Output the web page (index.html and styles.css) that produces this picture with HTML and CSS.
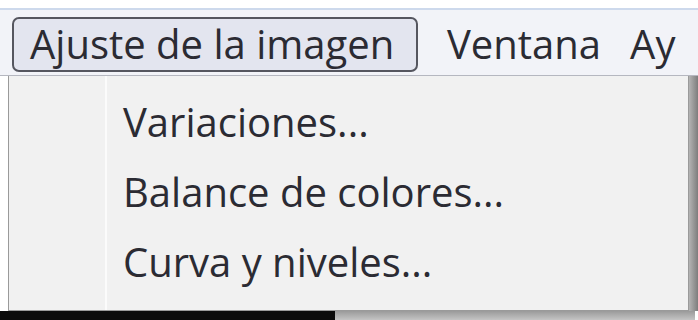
FILE: index.html
```html
<!DOCTYPE html>
<html lang="es">
<head>
    <meta charset="UTF-8">
    <title>Ajuste de la imagen</title>
    <link rel="stylesheet" href="styles.css">
</head>
<body>
    <div class="screen">
        <nav class="menubar">
            <span class="menu-title active">Ajuste de la imagen</span>
            <span class="menu-title">Ventana</span>
            <span class="menu-title">Ay</span>
        </nav>

        <div class="dropdown-row">
            <div class="dropdown">
                <div class="gutter"></div>
                <ul class="items">
                    <li>Variaciones...</li>
                    <li>Balance de colores...</li>
                    <li>Curva y niveles...</li>
                </ul>
            </div>
            <div class="side-shade"></div>
        </div>

        <div class="below">
            <div class="below-dark"></div>
            <div class="below-shade"></div>
        </div>
    </div>
</body>
</html>
```

FILE: styles.css
```css
:root {
    --menubar-bg: #f2f3f8;
    --button-bg: #e3e5ef;
    --button-border: #55565f;
    --menu-bg: #f1f1f1;
    --menu-border: #9a9a9a;
    --text: #2b2b33;
}

* {
    margin: 0;
    padding: 0;
    box-sizing: border-box;
}

body {
    background: #fff;
    font-family: 'Open Sans', 'Noto Sans', sans-serif;
    color: var(--text);
}

.screen {
    width: 698px;
    height: 320px;
    overflow: hidden;
    background: #fff;
}

.menubar {
    margin-top: 8px;
    height: 68px;
    border-top: 2px solid #cdd9ec;
    border-bottom: 1px solid #b5b7c0;
    background: var(--menubar-bg);
    display: flex;
    align-items: flex-start;
    gap: 29px;
    padding: 7px 0 0 12px;
}

.menu-title {
    height: 55px;
    display: flex;
    align-items: center;
    font-size: 40px;
    padding-bottom: 3px;
    white-space: nowrap;
}

.menu-title.active {
    width: 406px;
    padding-left: 16px;
    background: var(--button-bg);
    border: 2px solid var(--button-border);
    border-radius: 7px;
}

.dropdown-row {
    display: flex;
    height: 235px;
}

.dropdown {
    margin-left: 8px;
    width: 681px;
    display: flex;
    background: var(--menu-bg);
    border: 1px solid var(--menu-border);
    border-top: none;
}

.gutter {
    width: 98px;
    border-right: 2px solid #fbfbfb;
}

.items {
    list-style: none;
    padding: 11px 0 0 16px;
}

.items li {
    font-size: 40px;
    height: 70px;
    line-height: 70px;
    white-space: nowrap;
}

.side-shade {
    flex: 1;
    background: linear-gradient(to right, #b4b4b4, #7d7d7d);
}

.below {
    display: flex;
    height: 9px;
}

.below-dark {
    width: 335px;
    background: #0b0b0b;
}

.below-shade {
    width: 360px;
    background: linear-gradient(to bottom, #9a9a9a, #c4c4c4);
}
```
